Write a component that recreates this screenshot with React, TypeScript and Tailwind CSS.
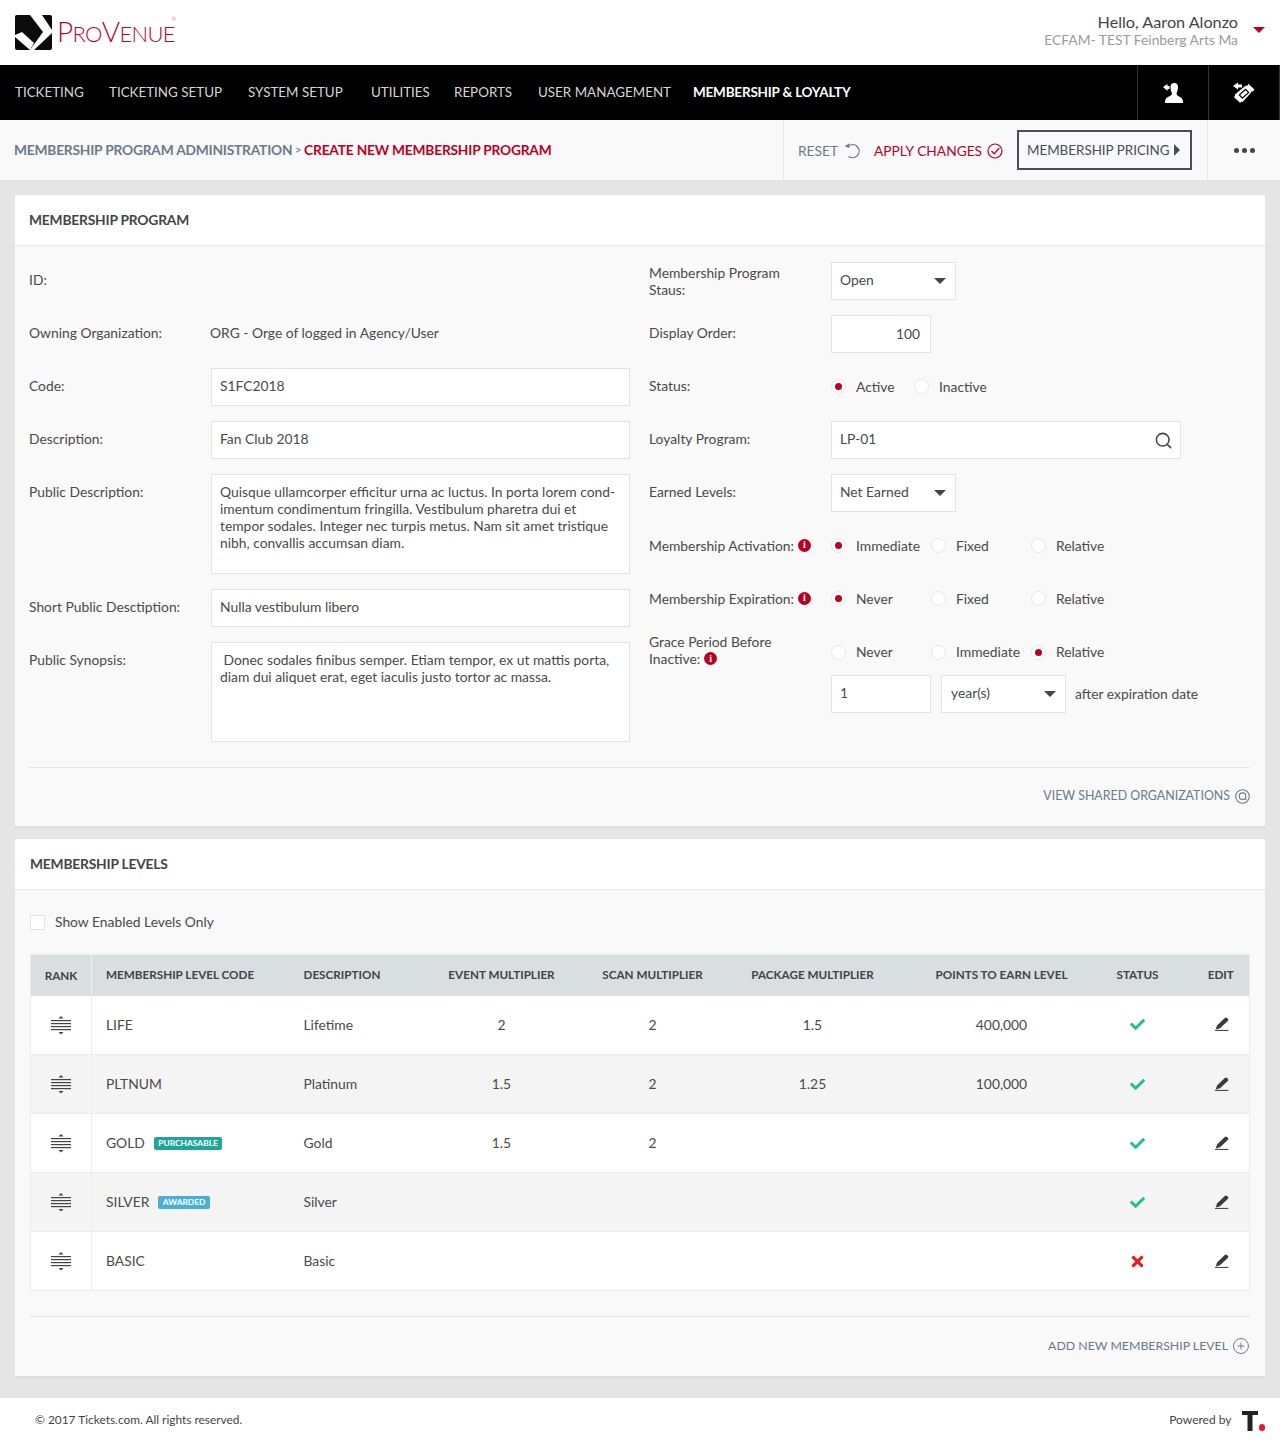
import { CirclePlus, Search } from "lucide-react";
import { FaCheck, FaTimes } from "react-icons/fa";

const navItems = [
  { label: "TICKETING", width: "w-[94px]" },
  { label: "TICKETING SETUP", width: "w-[139px]" },
  { label: "SYSTEM SETUP", width: "w-[123px]" },
  { label: "UTILITIES", width: "w-[83px]" },
  { label: "REPORTS", width: "w-[84px]" },
  { label: "USER MANAGEMENT", width: "w-[155px]" },
];

const levels = [
  { code: "LIFE", description: "Lifetime", event: "2", scan: "2", pkg: "1.5", points: "400,000", active: true },
  { code: "PLTNUM", description: "Platinum", event: "1.5", scan: "2", pkg: "1.25", points: "100,000", active: true },
  { code: "GOLD", badge: "PURCHASABLE", description: "Gold", event: "1.5", scan: "2", pkg: "", points: "", active: true },
  { code: "SILVER", badge: "AWARDED", description: "Silver", event: "", scan: "", pkg: "", points: "", active: true },
  { code: "BASIC", description: "Basic", event: "", scan: "", pkg: "", points: "", active: false },
];

function Logo() {
  return (
    <div className="flex items-center gap-[5px]">
      <svg width="37" height="35" viewBox="0 0 37 35">
        <rect width="37" height="35" rx="2" fill="#0b0b0b" />
        <path d="M15 0 L27 0 L37 15 L37 18 L19 35 L15 35 L28 17 Z" fill="#fff" />
        <path d="M0 20 L7 17 L19 28 L15 35 L0 22 Z" fill="#fff" />
      </svg>
      <span className="text-[#c0032c] font-['Lato',sans-serif] font-light tracking-[-0.7px] text-[28px] leading-none pb-[3px] flex items-baseline">
        <span>P</span><span className="text-[22px]">RO</span><span>V</span><span className="text-[22px]">ENUE</span>
        <span className="text-[5px] self-start -ml-[3px] tracking-normal">®</span>
      </span>
    </div>
  );
}

function SwapUserIcon() {
  return (
    <svg width="20" height="20" viewBox="0 0 20 20" fill="#fff">
      <path d="M0 4 L4.5 1 L4.5 3 L6.5 3 L6.5 6 L4.5 6 L4.5 8 Z" />
      <path d="M7.5 4 C7.5 1.5 9 0 11.2 0 C13.5 0 15 1.5 15 4 C15 7 14 9 13.5 10.5 C13.5 12 15 13 17 14 C19 15 20 16 20 20 L2 20 C2 16 3 15 5 14 C7 13 9 12 9 10.5 C8.5 9 7.5 7 7.5 4 Z" />
    </svg>
  );
}

function SwapTicketIcon() {
  return (
    <svg width="22" height="22" viewBox="0 0 22 22">
      <path d="M0 4 L5 0.5 L5 2.5 L9 2.5 L9 5.5 L5 5.5 L5 7.5 Z" fill="#fff" />
      <path d="M15 1.5 L21.5 7.5 L19.5 9.8 C18.6 9.2 17.6 9.8 17.8 11 L9.5 20 C8.6 19.4 7.5 19.9 7.3 21 L0.8 15 C2 14.7 2.4 13.6 1.7 12.8 L12.8 3.5 C13.6 4.2 14.8 3.7 15 2.5 Z" fill="#fff" />
      <path d="M12.5 6.5 L16.5 10.5 L9.5 17 L5.5 13 Z" fill="#000" />
      <path d="M12.5 8.2 L14.8 10.5 L9.5 15.3 L7.2 13 Z" fill="#fff" />
    </svg>
  );
}

function ResetIcon() {
  return (
    <svg width="16" height="16" viewBox="0 0 16 16" fill="none">
      <path d="M6 2.2 A6.5 6.5 0 1 1 4.6 13.2" stroke="#6b7a8b" strokeWidth="1.2" />
      <path d="M0.5 3.2 L5.6 0.2 L5.4 5 Z" fill="#6b7a8b" />
    </svg>
  );
}

function ApplyIcon() {
  return (
    <svg width="16" height="16" viewBox="0 0 16 16" fill="none" stroke="#bb0022" strokeWidth="1.2">
      <circle cx="8" cy="8" r="7" />
      <path d="M4.5 8 L7.2 10.8 L12.2 5" strokeWidth="1.3" />
    </svg>
  );
}

function SharedIcon() {
  return (
    <svg width="15" height="15" viewBox="0 0 15 15" fill="none" stroke="#6b7a8b">
      <circle cx="7.5" cy="7.5" r="6.8" strokeWidth="1.1" />
      <circle cx="7.5" cy="7.2" r="3.3" strokeWidth="1.1" />
      <path d="M9.8 9.7 L11.6 10.6" strokeWidth="1.1" />
    </svg>
  );
}

function RankIcon() {
  return (
    <svg width="20" height="19" viewBox="0 0 20 19" fill="#444" className="mx-auto">
      <path d="M10 0 L12.5 2.5 L7.5 2.5 Z" />
      <rect y="4" width="20" height="1.2" />
      <rect y="7" width="20" height="1.2" />
      <rect y="10" width="20" height="1.2" />
      <rect y="13" width="20" height="1.2" />
      <path d="M7.5 16 L12.5 16 L10 18.5 Z" />
    </svg>
  );
}

function PencilIcon() {
  return (
    <svg width="14" height="14" viewBox="0 0 14 14" fill="#3a3a3a" className="mx-auto">
      <path d="M9.8 1 C10.4 0.3 11.3 0.3 12 1 L12.8 1.8 C13.5 2.5 13.5 3.3 12.8 4 L5 11.2 L0.8 12.6 L2 8.5 Z" />
      <rect x="0" y="12.9" width="13.4" height="1" />
    </svg>
  );
}

function InfoDot() {
  return (
    <span className="inline-flex w-[13px] h-[13px] rounded-full bg-[#bb0022] text-white text-[10px] font-bold leading-none items-center justify-center font-['Liberation_Serif',serif]">
      i
    </span>
  );
}

function Radio({ label, checked, width }: { label: string; checked?: boolean; width: string }) {
  return (
    <div className={`flex items-center gap-[10px] ${width}`}>
      <span className="w-[15px] h-[15px] rounded-full bg-white border border-[#e6e6e6] flex items-center justify-center shrink-0">
        {checked && <span className="w-[7px] h-[7px] rounded-full bg-[#bb0022]" />}
      </span>
      <span>{label}</span>
    </div>
  );
}

function Select({ value, width }: { value: string; width: string }) {
  return (
    <div className={`h-[38px] bg-white border border-[#e3e3e3] pl-[8px] pr-[9px] flex items-center justify-between ${width}`}>
      <span className="pb-[1px]">{value}</span>
      <span className="w-0 h-0 border-x-[6px] border-x-transparent border-t-[6px] border-t-[#444]" />
    </div>
  );
}

function Input({ value, className = "" }: { value: string; className?: string }) {
  return (
    <div className={`h-[38px] bg-white border border-[#e3e3e3] px-[8px] pb-[1px] flex items-center ${className}`}>{value}</div>
  );
}

function LeftRow({ label, children, tall }: { label: string; children?: React.ReactNode; tall?: boolean }) {
  return (
    <div className={`flex ${tall ? "items-start" : "items-center min-h-[38px]"}`}>
      <div className={`w-[182px] shrink-0 ${tall ? "pt-[8px]" : "pb-[1px]"}`}>{label}</div>
      <div className="flex-1 min-w-0">{children}</div>
    </div>
  );
}

function RightRow({ label, children, labelClass = "pb-[3px]" }: { label: React.ReactNode; children?: React.ReactNode; labelClass?: string }) {
  return (
    <div className="flex items-center min-h-[38px]">
      <div className={`w-[182px] shrink-0 leading-[17px] ${labelClass}`}>{label}</div>
      <div className="flex-1 min-w-0 flex items-center">{children}</div>
    </div>
  );
}

function CardTitle({ title, className }: { title: string; className: string }) {
  return (
    <div className={`h-[51px] bg-white border-b border-[#e6e6e6] flex items-center text-[13.8px] font-bold text-[#444] tracking-[-0.2px] ${className}`}>
      {title}
    </div>
  );
}

export default function App() {
  return (
    <div className="w-[1280px] h-[1443px] bg-[#e5e5e5] font-['Lato',sans-serif] text-[13.85px] text-[#4a4a4a] flex flex-col">
      <header className="h-[65px] bg-white flex items-center justify-between pl-[15px] pr-[15px] shrink-0">
        <Logo />
        <div className="flex items-start pb-[6px]">
          <div className="text-right pr-[15px]">
            <div className="text-[16.2px] leading-[20px] text-[#444]">Hello, Aaron Alonzo</div>
            <div className="text-[13.85px] leading-[16px] text-[#9b9b9b]">ECFAM- TEST Feinberg Arts Ma</div>
          </div>
          <span className="w-0 h-0 mt-[15px] border-x-[6px] border-x-transparent border-t-[6px] border-t-[#bb0022]" />
        </div>
      </header>

      <nav className="h-[55px] bg-black flex items-stretch shrink-0 text-[13.4px]">
        <div className="flex-1 flex items-center pl-[15px]">
          {navItems.map((item) => (
            <span key={item.label} className={`text-[#d6d6d6] whitespace-nowrap ${item.width}`}>{item.label}</span>
          ))}
          <span className="text-white font-bold text-[13.5px] tracking-[-0.2px] whitespace-nowrap">MEMBERSHIP &amp; LOYALTY</span>
        </div>
        <div className="w-[71px] border-l border-[#333] flex items-center justify-center"><SwapUserIcon /></div>
        <div className="w-[72px] border-l border-[#333] border-r flex items-center justify-center"><SwapTicketIcon /></div>
      </nav>

      <div className="h-[60px] bg-[#f9f9f9] flex items-stretch shrink-0">
        <div className="flex-1 flex items-center pl-[14px] text-[13.75px] font-bold whitespace-nowrap tracking-[-0.2px]">
          <span className="text-[#6b7a8b]">MEMBERSHIP PROGRAM ADMINISTRATION</span>
          <span className="text-[#6b7a8b] font-normal text-[12px] mx-[2.5px]">&gt;</span>
          <span className="text-[#bb0022]">CREATE NEW MEMBERSHIP PROGRAM</span>
        </div>
        <div className="w-[424px] border-l border-[#e6e6e6] flex items-center pl-[14px] pr-[15px] justify-between text-[13.75px] whitespace-nowrap">
          <span className="flex items-center gap-[6px] text-[#6b7a8b] pt-[2px]">RESET <ResetIcon /></span>
          <span className="flex items-center gap-[5px] text-[#bb0022] pt-[2px]">APPLY CHANGES <ApplyIcon /></span>
          <span className="w-[175px] h-[40px] border-2 border-[#444f5c] text-[#444f5c] text-[13.4px] flex items-center pl-[8px] gap-[4px]">
            MEMBERSHIP PRICING
            <span className="w-0 h-0 border-y-[6px] border-y-transparent border-l-[6px] border-l-[#444f5c]" />
          </span>
        </div>
        <div className="w-[73px] border-l border-[#e6e6e6] flex items-center justify-center gap-[3px]">
          <span className="w-[5px] h-[5px] rounded-full bg-[#444]" />
          <span className="w-[5px] h-[5px] rounded-full bg-[#444]" />
          <span className="w-[5px] h-[5px] rounded-full bg-[#444]" />
        </div>
      </div>

      <main className="flex-1 px-[15px] pt-[15px] flex flex-col gap-[11px]">
        <section className="h-[633px] bg-[#f9f9f9] border-b-2 border-[#dedede]">
          <CardTitle title="MEMBERSHIP PROGRAM" className="px-[14px]" />
          <div className="pl-[14px] pr-[15px] pt-[16px]">
            <div className="grid grid-cols-[601px_1fr] gap-x-[19px]">
              <div className="flex flex-col gap-[15px]">
                <LeftRow label="ID:" />
                <LeftRow label="Owning Organization:"><span className="block -ml-[1px] pb-[1px]">ORG - Orge of logged in Agency/User</span></LeftRow>
                <LeftRow label="Code:"><Input value="S1FC2018" /></LeftRow>
                <LeftRow label="Description:"><Input value="Fan Club 2018" /></LeftRow>
                <LeftRow label="Public Description:" tall>
                  <div className="h-[100px] bg-white border border-[#e3e3e3] px-[8px] pt-[8px] leading-[17px]">
                    Quisque ullamcorper efficitur urna ac luctus. In porta lorem cond-<br />
                    imentum condimentum fringilla. Vestibulum pharetra dui et<br />
                    tempor sodales. Integer nec turpis metus. Nam sit amet tristique<br />
                    nibh, convallis accumsan diam.
                  </div>
                </LeftRow>
                <LeftRow label="Short Public Desctiption:"><Input value="Nulla vestibulum libero" /></LeftRow>
                <LeftRow label="Public Synopsis:" tall>
                  <div className="h-[100px] bg-white border border-[#e3e3e3] px-[8px] pt-[8px] leading-[17px]">
                    &nbsp;Donec sodales finibus semper. Etiam tempor, ex ut mattis porta,<br />
                    diam dui aliquet erat, eget iaculis justo tortor ac massa.
                  </div>
                </LeftRow>
              </div>
              <div className="flex flex-col gap-[15px]">
                <RightRow labelClass="pb-0" label={<>Membership Program<br />Staus:</>}><Select value="Open" width="w-[125px]" /></RightRow>
                <RightRow label="Display Order:">
                  <div className="w-[100px] h-[38px] bg-white border border-[#e3e3e3] px-[10px] flex items-center justify-end">100</div>
                </RightRow>
                <RightRow label="Status:">
                  <Radio label="Active" checked width="w-[83px]" />
                  <Radio label="Inactive" width="w-[100px]" />
                </RightRow>
                <RightRow label="Loyalty Program:">
                  <div className="w-[350px] h-[38px] bg-white border border-[#e3e3e3] pl-[8px] pr-[7px] flex items-center justify-between">
                    <span className="pb-[1px]">LP-01</span>
                    <Search size={19} strokeWidth={2} className="text-[#444]" />
                  </div>
                </RightRow>
                <RightRow label="Earned Levels:"><Select value="Net Earned" width="w-[125px]" /></RightRow>
                <RightRow labelClass="pb-[2px]" label={<span className="flex items-center gap-[4px]">Membership Activation: <InfoDot /></span>}>
                  <Radio label="Immediate" checked width="w-[100px]" />
                  <Radio label="Fixed" width="w-[100px]" />
                  <Radio label="Relative" width="w-[100px]" />
                </RightRow>
                <RightRow labelClass="pb-[2px]" label={<span className="flex items-center gap-[4px]">Membership Expiration: <InfoDot /></span>}>
                  <Radio label="Never" checked width="w-[100px]" />
                  <Radio label="Fixed" width="w-[100px]" />
                  <Radio label="Relative" width="w-[100px]" />
                </RightRow>
                <div className="flex flex-col gap-[3px]">
                  <RightRow labelClass="pb-[5px]" label={<>Grace Period Before<br /><span className="flex items-center gap-[4px]">Inactive: <InfoDot /></span></>}>
                    <Radio label="Never" width="w-[100px]" />
                    <Radio label="Immediate" width="w-[100px]" />
                    <Radio label="Relative" checked width="w-[100px]" />
                  </RightRow>
                  <div className="flex items-center pl-[182px]">
                    <Input value="1" className="w-[100px]" />
                    <div className="w-[10px]" />
                    <div className="w-[125px] h-[38px] bg-white border border-[#e3e3e3] pl-[9px] pr-[9px] flex items-center justify-between">
                      <span className="pb-[1px]">year(s)</span>
                      <span className="w-0 h-0 border-x-[6px] border-x-transparent border-t-[6px] border-t-[#444]" />
                    </div>
                    <span className="ml-[9px]">after expiration date</span>
                  </div>
                </div>
              </div>
            </div>
            <div className="mt-[25px] border-t border-[#e6e6e6] flex justify-end items-center gap-[5px] pt-[19px] text-[#6b7a8b] text-[12.4px]">
              VIEW SHARED ORGANIZATIONS <SharedIcon />
            </div>
          </div>
        </section>

        <section className="h-[539px] bg-[#f9f9f9] border-b-2 border-[#dedede]">
          <CardTitle title="MEMBERSHIP LEVELS" className="px-[15px]" />
          <div className="px-[15px]">
            <div className="h-[64px] flex items-center gap-[10px]">
              <span className="w-[15px] h-[15px] bg-white border border-[#e3e3e3]" />
              <span>Show Enabled Levels Only</span>
            </div>
            <table className="w-[1219px] table-fixed border-collapse border border-[#e9edee]">
              <colgroup>
                <col className="w-[61px]" />
                <col className="w-[197px]" />
                <col className="w-[138px]" />
                <col className="w-[150px]" />
                <col className="w-[152px]" />
                <col className="w-[168px]" />
                <col className="w-[210px]" />
                <col className="w-[62px]" />
                <col className="w-[81px]" />
              </colgroup>
              <thead>
                <tr className="h-[41px] bg-[#d9dee1] text-[11.7px] font-bold text-[#444] whitespace-nowrap">
                  <th className="font-bold border-r border-[#eef1f2] pt-[2px]">RANK</th>
                  <th className="font-bold text-left pl-[14px]">MEMBERSHIP LEVEL CODE</th>
                  <th className="font-bold text-left pl-[15px]">DESCRIPTION</th>
                  <th className="font-bold">EVENT MULTIPLIER</th>
                  <th className="font-bold">SCAN MULTIPLIER</th>
                  <th className="font-bold">PACKAGE MULTIPLIER</th>
                  <th className="font-bold">POINTS TO EARN LEVEL</th>
                  <th className="font-bold">STATUS</th>
                  <th className="font-bold pl-[24px]">EDIT</th>
                </tr>
              </thead>
              <tbody>
                {levels.map((level, i) => (
                  <tr key={level.code} className={`h-[59px] border-b border-[#e9edee] ${i % 2 === 1 ? "bg-[#f4f4f4]" : "bg-white"}`}>
                    <td className="border-r border-[#e9edee] pt-[1px]"><RankIcon /></td>
                    <td className="pl-[14px] pt-[1px]">
                      <span className="flex items-center gap-[9px]">
                        {level.code}
                        {level.badge && (
                          <span className={`h-[13px] rounded-[2px] px-[4.5px] text-white text-[8.4px] font-bold leading-[13px] ${level.badge === "AWARDED" ? "bg-[#4bafd6]" : "bg-[#1fa69a]"}`}>
                            {level.badge}
                          </span>
                        )}
                      </span>
                    </td>
                    <td className="pl-[15px] pt-[1px]">{level.description}</td>
                    <td className="text-center pt-[1px]">{level.event}</td>
                    <td className="text-center pt-[1px]">{level.scan}</td>
                    <td className="text-center pt-[1px]">{level.pkg}</td>
                    <td className="text-center pt-[1px]">{level.points}</td>
                    <td>
                      {level.active
                        ? <FaCheck size={15} className="mx-auto text-[#1fbd9a]" />
                        : <FaTimes size={17} className="mx-auto text-[#e02020]" />}
                    </td>
                    <td className="pl-[26px] pb-[1px]"><PencilIcon /></td>
                  </tr>
                ))}
              </tbody>
            </table>
            <div className="mt-[25px] border-t border-[#e6e6e6] flex justify-end items-center gap-[4px] pt-[20px] text-[#6b7a8b] text-[12.3px]">
              ADD NEW MEMBERSHIP LEVEL <CirclePlus size={18} strokeWidth={1.3} />
            </div>
          </div>
        </section>
      </main>

      <footer className="h-[45px] bg-white shrink-0 flex items-center justify-between pl-[35px] pr-[15px] text-[#444]">
        <span className="text-[11.9px] pb-[2px]">© 2017 Tickets.com. All rights reserved.</span>
        <span className="flex items-center gap-[10px] text-[12px]">
          <span className="pb-[2px]">Powered by</span>
          <span className="flex items-end gap-[1px]">
            <svg width="16" height="20" viewBox="0 0 16 20" fill="#222">
              <path d="M0 0 H16 V4 H10.5 V20 H5.5 V4 H0 Z" />
            </svg>
            <span className="w-[6.5px] h-[6.5px] rounded-full bg-[#e8192c]" />
          </span>
        </span>
      </footer>
    </div>
  );
}
